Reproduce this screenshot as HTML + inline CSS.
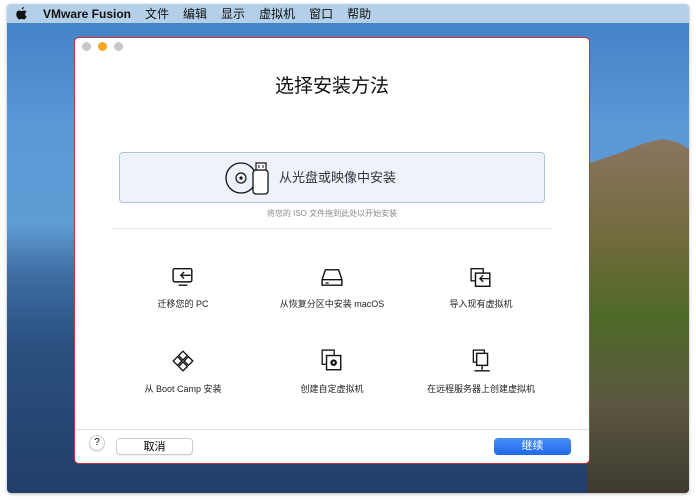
<!DOCTYPE html>
<html><head><meta charset="utf-8"><style>
*{margin:0;padding:0;box-sizing:border-box}
body{width:696px;height:500px;background:#fff;position:relative;overflow:hidden;font-family:"Liberation Sans","Noto Sans CJK SC",sans-serif}
.screen{position:absolute;left:7px;top:4px;width:682px;height:489px;border-radius:4px;overflow:hidden;
background:linear-gradient(180deg,#3f7fc4 0%,#5a98d6 25%,#5f9cd4 45%,#3f6ea3 55%,#2a5080 70%,#223f6a 100%);box-shadow:0 1px 3px rgba(0,0,0,.3)}
.mnt{position:absolute;left:580px;top:0;width:102px;height:489px}
.menu{position:absolute;left:0;top:0;width:682px;height:19px;background:rgba(190,215,235,.92);font-size:12px;color:#111;display:flex;align-items:center}
.menu span{margin-right:14px}
.win{position:absolute;left:74px;top:37px;width:516px;height:427px;background:#fff;border:1px solid #d0303a;border-radius:5px}
.dot{position:absolute;top:4px;width:9px;height:9px;border-radius:50%;background:#c8c8c8}
.t{position:absolute;left:0;width:100%;text-align:center}
.box{position:absolute;left:44px;top:114px;width:426px;height:51px;background:#eef3fb;border:1px solid #a9c3e0;border-radius:4px}
.it{position:absolute;width:170px;text-align:center;font-size:9px;color:#222}
.it svg{display:block;margin:0 auto 9px}
.btn{position:absolute;top:400px;height:17px;border-radius:4px;font-size:11px;text-align:center;line-height:16px}
</style></head><body>
<div class="screen">
<svg class="mnt" viewBox="0 0 102 489" preserveAspectRatio="none">
<defs><linearGradient id="g" x1="0" y1="0" x2="0" y2="1"><stop offset="0" stop-color="#8b7560"/><stop offset=".3" stop-color="#6f6a3a"/><stop offset=".5" stop-color="#4f6a28"/><stop offset=".75" stop-color="#5b5740"/><stop offset="1" stop-color="#3e3a30"/></linearGradient></defs>
<path d="M0 160 L30 150 L55 140 L75 135 L90 138 L102 145 L102 489 L0 489 Z" fill="url(#g)"/>
</svg>
<div class="menu"><svg style="margin-left:9px;margin-right:16px" width="11" height="13" viewBox="0 0 11 13"><path d="M8 0c0 1.2-.9 2.4-2.2 2.4C5.7 1.2 6.7 0 8 0zM10.6 9.3c-.5 1.3-1.4 3.2-2.6 3.2-1 0-1.2-.6-2.3-.6s-1.4.6-2.3.6C2.200 12.5.3 9.800.3 7.100c0-2.200 1.4-3.600 2.800-3.600 1 0 1.700.6 2.500.6.800 0 1.400-.6 2.500-.6.800 0 1.900.4 2.500 1.400-2.100 1.200-1.800 4.100 0 4.400z" fill="#111"/></svg><span style="font-weight:bold;margin-right:14px">VMware Fusion</span><span>文件</span><span>编辑</span><span>显示</span><span>虚拟机</span><span>窗口</span><span>帮助</span></div>
</div>
<div class="win">
<div class="dot" style="left:7px"></div><div class="dot" style="left:23px;background:#f5a623"></div><div class="dot" style="left:39px"></div>
<div class="t" style="top:33px;font-size:19px;color:#111">选择安装方法</div>
<div class="box">
<svg style="position:absolute;left:104px;top:7px" width="46" height="36" viewBox="0 0 46 36"><circle cx="17" cy="18" r="15" fill="none" stroke="#111" stroke-width="1.3"/><circle cx="17" cy="18" r="5" fill="none" stroke="#111" stroke-width="1.2"/><circle cx="17" cy="18" r="1.6" fill="#111"/><rect x="29" y="10" width="15" height="24" rx="3" fill="#fff" stroke="#111" stroke-width="1.3"/><rect x="32" y="3" width="10" height="7" fill="#fff" stroke="#111" stroke-width="1.2"/><path d="M35 5v3M39 5v3" stroke="#111"/></svg>
<div style="position:absolute;left:159px;top:14px;font-size:13px;color:#333">从光盘或映像中安装</div>
</div>
<div class="t" style="top:170px;font-size:8px;color:#888">将您的 ISO 文件拖到此处以开始安装</div>
<div style="position:absolute;left:36px;top:190px;width:442px;height:1px;background:#e4e4e4"></div>
<div class="it" style="left:23px;top:229px"><svg width="22" height="21" viewBox="0 0 20 18"><rect x="1" y="1" width="17" height="12" rx="1.5" fill="none" stroke="#111" stroke-width="1.3"/><path d="M6 16h8M17 7H8M11 4L8 7l3 3" fill="none" stroke="#111" stroke-width="1.3"/></svg>迁移您的 PC</div>
<div class="it" style="left:172px;top:229px"><svg width="22" height="21" viewBox="0 0 20 18"><path d="M4 2h12l3 9v5H1v-5z" fill="none" stroke="#111" stroke-width="1.3"/><path d="M1 11h18M4 14h3" stroke="#111" stroke-width="1.2"/></svg>从恢复分区中安装 macOS</div>
<div class="it" style="left:321px;top:229px"><svg width="22" height="21" viewBox="0 0 20 18"><rect x="1" y="1" width="11" height="11" fill="none" stroke="#111" stroke-width="1.2"/><rect x="5" y="5" width="13" height="12" fill="#fff" stroke="#111" stroke-width="1.3"/><path d="M18 10h-9M12 7l-3 3 3 3" fill="none" stroke="#111" stroke-width="1.2"/></svg>导入现有虚拟机</div>
<div class="it" style="left:23px;top:311px"><svg width="24" height="24" viewBox="0 0 22 22"><g fill="none" stroke="#111" stroke-width="1.2"><path d="M11 2l4 4-4 4-4-4z"/><path d="M11 12l4 4-4 4-4-4z"/><path d="M6 7l4 4-4 4-4-4z"/><path d="M16 7l4 4-4 4-4-4z"/></g></svg>从 Boot Camp 安装</div>
<div class="it" style="left:172px;top:311px"><svg width="22" height="24" viewBox="0 0 20 22"><rect x="1" y="1" width="11" height="13" fill="none" stroke="#111" stroke-width="1.2"/><rect x="5" y="6" width="13" height="13" fill="#fff" stroke="#111" stroke-width="1.3"/><circle cx="11.5" cy="12.5" r="3" fill="#111"/><circle cx="11.5" cy="12.5" r="1" fill="#fff"/></svg>创建自定虚拟机</div>
<div class="it" style="left:321px;top:311px"><svg width="22" height="24" viewBox="0 0 20 22"><rect x="3" y="1" width="10" height="11" fill="none" stroke="#111" stroke-width="1.2"/><rect x="6" y="4" width="10" height="11" fill="#fff" stroke="#111" stroke-width="1.3"/><path d="M11 15v4M4 20h14" stroke="#111" stroke-width="1.3"/></svg>在远程服务器上创建虚拟机</div>
<div style="position:absolute;left:0;top:391px;width:514px;height:1px;background:#e0e0e0"></div>
<div style="position:absolute;left:14px;top:397px;width:16px;height:16px;border-radius:50%;border:1px solid #ccc;font-size:10px;text-align:center;line-height:14px;box-shadow:0 1px 1px rgba(0,0,0,.1)">?</div>
<div class="btn" style="left:41px;width:77px;border:1px solid #ccc;background:#fff;box-shadow:0 1px 1px rgba(0,0,0,.08)">取消</div>
<div class="btn" style="left:419px;width:77px;background:linear-gradient(#4a8df8,#1f6ae8);color:#fff">继续</div>
</div>
</body></html>
